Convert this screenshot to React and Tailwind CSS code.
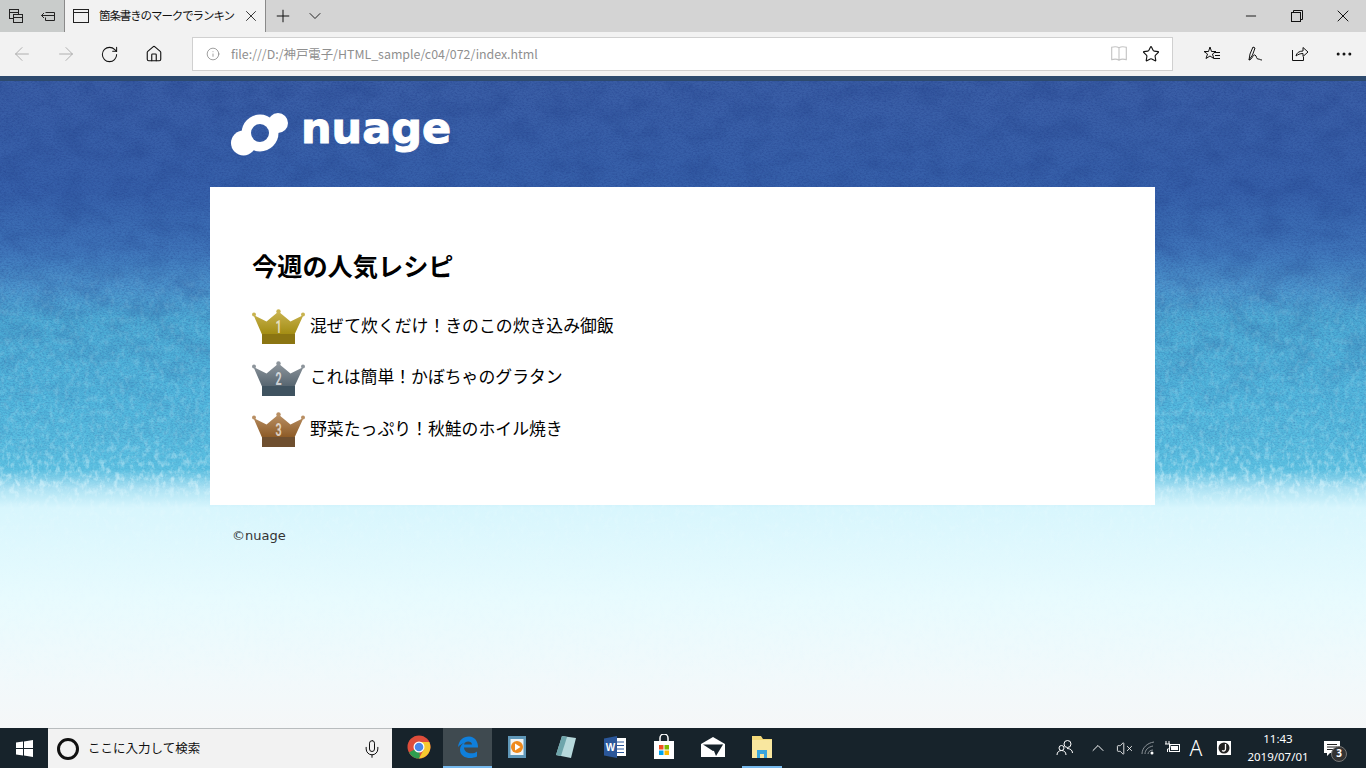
import React from "react";
import {
  ArrowLeft,
  ArrowRight,
  ChevronDown,
  ChevronUp,
  Home,
  Info,
  Mic,
  Minus,
  MoreHorizontal,
  Plus,
  RotateCw,
  Star,
  VolumeX,
  X,
} from "lucide-react";

const jp = "font-['Noto_Sans_CJK_JP','Noto_Sans',sans-serif]";

const recipes = [
  { rank: 1, title: "混ぜて炊くだけ！きのこの炊き込み御飯", top: "#c9b34f", bottom: "#a28c12", base: "#8b7512" },
  { rank: 2, title: "これは簡単！かぼちゃのグラタン", top: "#8d959c", bottom: "#566570", base: "#3f5360" },
  { rank: 3, title: "野菜たっぷり！秋鮭のホイル焼き", top: "#b98f63", bottom: "#8c5a26", base: "#6f4f2f" },
];

const Crown = ({ rank, top, bottom, base }) => (
  <svg width="53" height="35" viewBox="0 0 53 35" className="shrink-0">
    <defs>
      <linearGradient id={`crown${rank}`} x1="0" y1="0" x2="0" y2="1">
        <stop offset="0" stopColor={top} />
        <stop offset="1" stopColor={bottom} />
      </linearGradient>
    </defs>
    <path d="M1.500 6 L14.500 12.500 L26.500 2.500 L38.500 12.500 L51.500 6 L42.500 25.500 L10 25.500 Z" fill={`url(#crown${rank})`} />
    <circle cx="2" cy="5.500" r="2" fill={top} />
    <circle cx="26.500" cy="2.500" r="2.200" fill={top} />
    <circle cx="51" cy="5.500" r="2" fill={top} />
    <rect x="10" y="25" width="33" height="10" fill={base} />
    <text
      x="26.500"
      y="24"
      textAnchor="middle"
      fontSize="18"
      fontWeight="700"
      fill="#ffffff"
      fillOpacity="0.7"
      fontFamily="Roboto, sans-serif"
      transform="translate(10.600 0) scale(0.6 1)"
    >
      {rank}
    </text>
  </svg>
);

const Texture = () => (
  <svg className="absolute inset-0 h-full w-full" aria-hidden="true">
    <defs>
      <filter id="grain" x="0" y="0" width="100%" height="100%" colorInterpolationFilters="sRGB">
        <feTurbulence type="fractalNoise" baseFrequency="0.45 0.7" numOctaves="3" seed="7" />
        <feColorMatrix values="0 0 0 0 0.1  0 0 0 0 0.2  0 0 0 0 0.5  1.8 0 0 0 -0.7" />
      </filter>
      <filter id="cloud" x="0" y="0" width="100%" height="100%" colorInterpolationFilters="sRGB">
        <feTurbulence type="fractalNoise" baseFrequency="0.035 0.05" numOctaves="4" seed="21" />
        <feColorMatrix values="0 0 0 0 0.12  0 0 0 0 0.24  0 0 0 0 0.52  2.4 0 0 0 -1" />
      </filter>
      <filter id="speck" x="0" y="0" width="100%" height="100%" colorInterpolationFilters="sRGB">
        <feTurbulence type="fractalNoise" baseFrequency="0.2 0.14" numOctaves="4" seed="12" />
        <feColorMatrix values="0 0 0 0 0.9  0 0 0 0 0.98  0 0 0 0 1  3 0 0 0 -1.35" />
      </filter>
      <linearGradient id="grainFade" x1="0" y1="0" x2="0" y2="1">
        <stop offset="0" stopColor="#fff" stopOpacity="0.4" />
        <stop offset="0.55" stopColor="#fff" stopOpacity="0.25" />
        <stop offset="0.64" stopColor="#fff" stopOpacity="0" />
      </linearGradient>
      <linearGradient id="cloudFade" x1="0" y1="0" x2="0" y2="1">
        <stop offset="0" stopColor="#fff" stopOpacity="0.26" />
        <stop offset="0.4" stopColor="#fff" stopOpacity="0.18" />
        <stop offset="0.6" stopColor="#fff" stopOpacity="0" />
      </linearGradient>
      <linearGradient id="speckFade" x1="0" y1="0" x2="0" y2="1">
        <stop offset="0.28" stopColor="#fff" stopOpacity="0" />
        <stop offset="0.34" stopColor="#fff" stopOpacity="0.1" />
        <stop offset="0.55" stopColor="#fff" stopOpacity="0.2" />
        <stop offset="0.62" stopColor="#fff" stopOpacity="0.55" />
        <stop offset="0.66" stopColor="#fff" stopOpacity="0.3" />
        <stop offset="0.85" stopColor="#fff" stopOpacity="0.2" />
        <stop offset="0.95" stopColor="#fff" stopOpacity="0" />
      </linearGradient>
      <mask id="grainMask">
        <rect width="100%" height="100%" fill="url(#grainFade)" />
      </mask>
      <mask id="cloudMask">
        <rect width="100%" height="100%" fill="url(#cloudFade)" />
      </mask>
      <mask id="speckMask">
        <rect width="100%" height="100%" fill="url(#speckFade)" />
      </mask>
    </defs>
    <g mask="url(#cloudMask)">
      <rect width="100%" height="100%" filter="url(#cloud)" />
    </g>
    <g mask="url(#grainMask)">
      <rect width="100%" height="100%" filter="url(#grain)" />
    </g>
    <g mask="url(#speckMask)">
      <rect width="100%" height="100%" filter="url(#speck)" />
    </g>
  </svg>
);

const Logo = () => (
  <div className="flex items-start gap-[13px]">
    <svg width="57" height="43" viewBox="0 0 57 43">
      <defs>
        <mask id="logoHole">
          <rect width="57" height="43" fill="#fff" />
          <circle cx="29" cy="20" r="9" fill="#000" />
        </mask>
      </defs>
      <g fill="#fff" mask="url(#logoHole)">
        <circle cx="29" cy="20" r="18.500" />
        <circle cx="12.500" cy="30" r="12.500" />
        <circle cx="47" cy="10" r="10" />
      </g>
    </svg>
    <span className="mt-[-6px] font-['DejaVu_Sans',sans-serif] text-[43px] leading-none font-bold text-white [-webkit-text-stroke:1px_white]">
      nuage
    </span>
  </div>
);

const TabBar = () => (
  <div className="flex h-8 bg-[#d4d4d4] text-[#111]">
    <div className="flex w-16 bg-[#c9cccb]">
      <div className="flex w-8 items-center justify-center">
        <svg width="16" height="16" viewBox="0 0 16 16" fill="none" stroke="#222">
          <rect x="1.500" y="1.500" width="9" height="9" fill="#c9cccb" />
          <path d="M1.500 4.500h9" />
          <rect x="5.500" y="6.500" width="9" height="8" fill="#c9cccb" />
          <path d="M5.500 9.500h9" />
        </svg>
      </div>
      <div className="flex w-8 items-center justify-center">
        <svg width="16" height="16" viewBox="0 0 16 16" fill="none" stroke="#222">
          <path d="M5.500 4.500h9v8h-9v-3M14 7.500H1.500M4 5L1.500 7.500 4 10" />
        </svg>
      </div>
    </div>
    <div className="flex w-[202px] items-center border-x border-[#8a8a8a] bg-[#f2f2f2]">
      <svg width="16" height="14" viewBox="0 0 16 14" fill="none" stroke="#222" className="ml-2">
        <rect x="0.500" y="0.500" width="15" height="13" />
        <path d="M0.500 3.500h15" />
      </svg>
      <span className={`${jp} ml-[10px] w-[136px] overflow-hidden text-[11.5px] tracking-[-1.1px] whitespace-nowrap`}>
        箇条書きのマークでランキン
      </span>
      <X size={18} strokeWidth={1.1} className="ml-[7px]" />
    </div>
    <div className="flex w-[34px] items-center justify-center">
      <Plus size={20} strokeWidth={1.2} />
    </div>
    <div className="flex w-[30px] items-center justify-center">
      <ChevronDown size={20} strokeWidth={1.1} />
    </div>
    <div className="ml-auto flex">
      <div className="flex w-[46px] items-center justify-center">
        <Minus size={16} strokeWidth={1.4} />
      </div>
      <div className="flex w-[46px] items-center justify-center">
        <svg width="12" height="12" viewBox="0 0 12 12" fill="none" stroke="#111">
          <rect x="0.500" y="2.500" width="9" height="9" />
          <path d="M2.500 2.500v-2h9v9h-2" />
        </svg>
      </div>
      <div className="flex w-[46px] items-center justify-center">
        <X size={20} strokeWidth={1.2} />
      </div>
    </div>
  </div>
);

const ToolButton = ({ children }) => (
  <div className="flex h-full w-11 items-center justify-center">{children}</div>
);

const Toolbar = () => (
  <div className="flex h-11 items-center bg-[#f2f2f2] text-[#111]">
    <ToolButton>
      <ArrowLeft size={22} strokeWidth={1} color="#a8a8a8" />
    </ToolButton>
    <ToolButton>
      <ArrowRight size={22} strokeWidth={1} color="#a8a8a8" />
    </ToolButton>
    <ToolButton>
      <RotateCw size={19} strokeWidth={1.3} />
    </ToolButton>
    <ToolButton>
      <Home size={18} strokeWidth={1.5} />
    </ToolButton>
    <div className="ml-[16px] flex h-[34px] w-[982px] items-center border border-[#d0d0d0] bg-white">
      <Info size={14} strokeWidth={1.2} color="#777" className="ml-[13px]" />
      <span className={`${jp} ml-[11px] text-[12.4px] text-[#8f8f8f]`}>
        file:///D:/神戸電子/HTML_sample/c04/072/index.html
      </span>
      <svg width="18" height="18" viewBox="0 0 16 16" fill="none" stroke="#c4c4c4" className="mr-[14px] ml-auto">
        <path d="M8 2.500C6.500 1.500 3.500 1.500 1.500 2v11c2-.5 5-.5 6.500.5 1.500-1 4.500-1 6.500-.5V2c-2-.5-5-.5-6.500.5zM8 2.500v11" />
      </svg>
      <Star size={18} strokeWidth={1.5} className="mr-[12px]" />
    </div>
    <div className="ml-[17px] flex h-full">
      <ToolButton>
        <svg width="18" height="18" viewBox="0 0 18 18" fill="none" stroke="#111">
          <path d="M7 2l1.500 4.500H13L9.500 9l1.300 4.500L7 11l-4 2.500L4.500 9 1 6.500h4.500z" />
          <path d="M11 7.500h6M12 10.500h5M11 13.500h6" />
        </svg>
      </ToolButton>
      <ToolButton>
        <svg width="18" height="18" viewBox="0 0 18 18" fill="none" stroke="#111">
          <path d="M2 15l1-6 3-7 2 1-2.500 7L2 15zM2 15c3 0 4-6 6-5s1 4 3 4 2 1 4 1" />
        </svg>
      </ToolButton>
      <ToolButton>
        <svg width="18" height="18" viewBox="0 0 18 18" fill="none" stroke="#111">
          <path d="M1.500 5v10.500h11V12M5 11c.5-3 3-5 7-5V2.500L17 7l-5 4.500V8.500c-3 0-5 1-7 2.500z" />
        </svg>
      </ToolButton>
      <ToolButton>
        <MoreHorizontal size={20} strokeWidth={1.6} />
      </ToolButton>
    </div>
  </div>
);

const TaskIcon = ({ active, line, children }) => (
  <div className={`flex h-10 w-[49px] flex-col items-center ${active ? "bg-[#3f4a50]" : ""}`}>
    <div className="flex flex-1 items-center justify-center">{children}</div>
    <div className={`h-[2px] ${line} ${line ? "bg-[#76b9ed]" : ""}`} />
  </div>
);

const Taskbar = () => (
  <div className="flex h-10 bg-[#17232b] text-white">
    <div className="flex w-12 items-center justify-center">
      <svg width="17" height="17" viewBox="0 0 17 17" fill="#fff">
        <path d="M0 2.500L7 1.500V8H0zM8 1.400L17 0V8H8zM0 9h7v6.500l-7-1zM8 9h9v8l-9-1.400z" />
      </svg>
    </div>
    <div className="flex w-[344px] items-center border-t border-[#b8bcbe] bg-[#f2f2f2] text-[#111]">
      <div className="ml-[9px] h-[22px] w-[22px] rounded-full border-[3px] border-[#111]" />
      <span className={`${jp} ml-[9px] text-[12.5px]`}>ここに入力して検索</span>
      <Mic size={20} strokeWidth={1.2} className="mr-[10px] ml-auto" />
    </div>
    <div className="ml-[2px] flex">
      <TaskIcon>
        <svg width="24" height="24" viewBox="0 0 24 24">
          <circle cx="12" cy="12" r="11.500" fill="#de4d3b" />
          <path d="M12 12L2 17.500A11.500 11.500 0 0 0 13 23.500z" fill="#2f9e4f" />
          <path d="M12 7h10.300A11.500 11.500 0 0 1 12 23.500L17 14z" fill="#f7c92f" />
          <circle cx="12" cy="12" r="5.500" fill="#fff" />
          <circle cx="12" cy="12" r="4.300" fill="#4a87e8" />
        </svg>
      </TaskIcon>
      <TaskIcon active line="w-full">
        <svg width="22" height="24" viewBox="0 0 22 24" fill="none">
          <path d="M1 12C2 5 6 1.500 12 1.500c6 0 9 5 9 11H7c0 6 9 7.500 13 4v5c-6 3-17 2-17-7 0-3 2-6 5-7-3 1-5 2.500-7 4.500zM7 9.500h8c0-4-7.500-4-8 0z" fill="#0f7fdc" />
        </svg>
      </TaskIcon>
      <TaskIcon>
        <svg width="20" height="24" viewBox="0 0 20 24">
          <rect x="1" y="1" width="18" height="22" fill="#5f97b8" />
          <rect x="3.500" y="4" width="13" height="16" fill="#f2f5f5" />
          <circle cx="10" cy="12" r="6" fill="#ef8a1d" />
          <path d="M8 8.500l5.500 3.500L8 15.500z" fill="#fff" />
        </svg>
      </TaskIcon>
      <TaskIcon>
        <svg width="24" height="24" viewBox="0 0 24 24">
          <path d="M8 1l14 2-5 20-15-3z" fill="#b7d9dc" />
          <path d="M8 1l5 1-6 19-5-1z" fill="#6ea5ab" />
        </svg>
      </TaskIcon>
      <TaskIcon>
        <svg width="24" height="24" viewBox="0 0 24 24">
          <rect x="8" y="3" width="15" height="18" fill="#fff" />
          <path d="M11 7h10M11 10.500h10M11 14h10M11 17.500h10" stroke="#2b579a" />
          <path d="M1 3.500L14 1v22L1 20.500z" fill="#2b579a" />
          <text x="7.500" y="15.500" textAnchor="middle" fontSize="10" fontWeight="700" fill="#fff" fontFamily="Liberation Sans, sans-serif">W</text>
        </svg>
      </TaskIcon>
      <TaskIcon>
        <svg width="22" height="26" viewBox="0 0 22 26" fill="none">
          <path d="M7 7V4a4 4 0 0 1 8 0v3" stroke="#fff" strokeWidth="1.500" />
          <rect x="1" y="7" width="20" height="18" fill="#fff" />
          <rect x="6" y="11" width="4.500" height="4.500" fill="#f25022" />
          <rect x="11.500" y="11" width="4.500" height="4.500" fill="#7fba00" />
          <rect x="6" y="16.500" width="4.500" height="4.500" fill="#00a4ef" />
          <rect x="11.500" y="16.500" width="4.500" height="4.500" fill="#ffb900" />
        </svg>
      </TaskIcon>
      <TaskIcon>
        <svg width="24" height="20" viewBox="0 0 24 20">
          <path d="M0 7L12 0l12 7v13H0z" fill="#fff" />
          <path d="M2 7.500h20L12 14z" fill="#17232b" />
          <path d="M22 7.500L8 10l5 4 2 5z" fill="#17232b" />
        </svg>
      </TaskIcon>
      <TaskIcon line="w-10">
        <svg width="22" height="24" viewBox="0 0 22 24">
          <path d="M1 1h9l2 3h9v19H1z" fill="#f4d97a" />
          <path d="M1 5h20v18H1z" fill="#f9e79f" />
          <path d="M6 23v-8h10v8h-3v-4H9v4z" fill="#3aa6dd" />
        </svg>
      </TaskIcon>
    </div>
    <div className="ml-auto flex items-center">
      <div className="flex w-9 justify-center">
        <svg width="18" height="18" viewBox="0 0 18 18" fill="none" stroke="#fff">
          <circle cx="11.500" cy="5" r="3.500" />
          <circle cx="5.500" cy="9" r="2.500" />
          <path d="M1 16c0-3 2-4.500 4.500-4.500S10 13 10 16M11 9.500c3 0 5.500 1.500 5.500 4.500" />
        </svg>
      </div>
      <div className="flex w-[29px] justify-center">
        <ChevronUp size={20} strokeWidth={1.2} />
      </div>
      <div className="flex w-[25px] justify-center">
        <VolumeX size={17} strokeWidth={1.2} />
      </div>
      <div className="flex w-[24px] justify-center">
        <svg width="16" height="14" viewBox="0 0 16 14" fill="none" stroke="#8b9297">
          <path d="M1 13C1 7 6 2 13 1M4 13c0-4 3-7 8-8M7 13c0-2 2-4 5-4" />
          <circle cx="11" cy="12" r="1.500" fill="#fff" stroke="none" />
        </svg>
      </div>
      <div className="flex w-[23px] justify-center">
        <svg width="17" height="14" viewBox="0 0 17 14" fill="none" stroke="#fff">
          <rect x="5.500" y="3.500" width="10" height="7" />
          <rect x="7" y="5" width="7" height="4" fill="#fff" stroke="none" />
          <path d="M2 0v3M5 0v3M1 3h5v2c0 2-1 3-2.500 3v3" />
        </svg>
      </div>
      <div className="flex w-[24px] justify-center font-['Noto_Sans',sans-serif] text-[21px] leading-none font-light">
        A
      </div>
      <div className="flex w-8 justify-center">
        <svg width="14" height="14" viewBox="0 0 14 14">
          <rect width="14" height="14" fill="#fff" />
          <circle cx="7" cy="7" r="5.500" fill="#222" />
          <path d="M8.500 3v5c0 2-2 2.500-3.500 1.500" fill="none" stroke="#fff" strokeWidth="1.300" />
        </svg>
      </div>
      <div className="flex w-[76px] flex-col items-center font-['Noto_Sans',sans-serif] text-[11.5px] leading-[18px]">
        <span>11:43</span>
        <span>2019/07/01</span>
      </div>
      <div className="relative flex w-8 justify-center">
        <svg width="16" height="15" viewBox="0 0 16 15">
          <path d="M0 0h16v12H6l-3 3v-3H0z" fill="#fff" />
          <path d="M3 3.500h10M3 6h10M3 8.500h7" stroke="#222" />
        </svg>
        <span className="absolute top-[5px] left-[15px] flex h-4 w-4 items-center justify-center rounded-full border border-[#777] bg-[#333] font-['Noto_Sans',sans-serif] text-[10px] font-bold">
          3
        </span>
      </div>
      <div className="w-[18px]" />
    </div>
  </div>
);

export default function App() {
  return (
    <div className="flex h-[768px] w-[1366px] flex-col overflow-hidden">
      <TabBar />
      <Toolbar />
      <div className="h-[5px] bg-[#2d4a6e]" />
      <main className="relative flex-1 bg-[linear-gradient(180deg,#3a5ea6_0%,#3660aa_17%,#3f75ba_26%,#4b94cc_32%,#4cabd5_37%,#52b8de_49%,#5cc1e2_60%,#aee3f4_63%,#d8f6fd_66%,#e8fbfe_80%,#f2f9fb_93%,#f5f7f8_100%)]">
        <Texture />
        <div className="relative ml-[210px] w-[945px]">
          <header className="h-[106px] pt-[32px] pl-[21px]">
            <Logo />
          </header>
          <section className={`${jp} h-[318px] bg-white px-[42px] pt-[60px] text-black`}>
            <h1 className="h-[37px] text-[25.2px] leading-[37px] font-bold">今週の人気レシピ</h1>
            <ul className="mt-[25px] flex flex-col gap-[16.5px]">
              {recipes.map((recipe) => (
                <li key={recipe.rank} className="flex items-center gap-[5px] text-[16.85px]">
                  <Crown rank={recipe.rank} top={recipe.top} bottom={recipe.bottom} base={recipe.base} />
                  <span className="mb-[4px] leading-[26px]">{recipe.title}</span>
                </li>
              ))}
            </ul>
          </section>
          <footer className="pt-[22px] pl-[22px] font-['DejaVu_Sans',sans-serif] text-[13px] leading-[17px] text-[#333]">
            ©nuage
          </footer>
        </div>
      </main>
      <Taskbar />
    </div>
  );
}
